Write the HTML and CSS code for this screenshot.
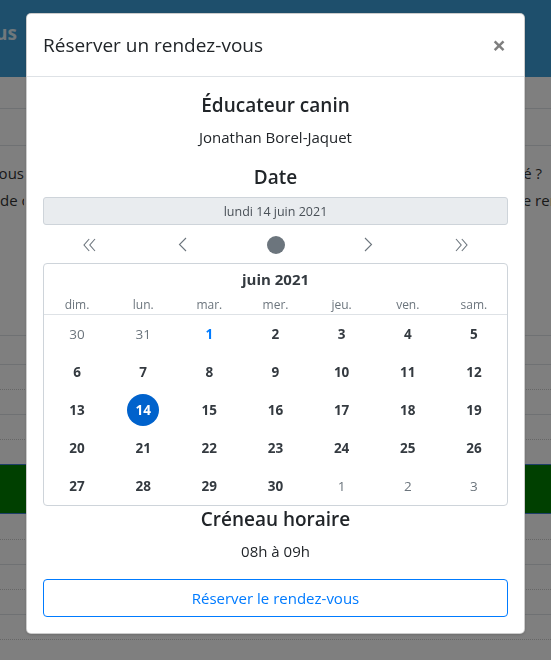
FILE: index.html
```html
<!DOCTYPE html>
<html lang="fr">
<head>
<meta charset="utf-8">
<title>Réserver un rendez-vous</title>
<link rel="stylesheet" href="styles.css">
</head>
<body>
<div class="page">
  <header class="topbar"><span class="brand"><span>Nous</span></span></header>
  <div class="subnav"></div>
  <div class="subnav second"></div>
  <div class="intro">
    <div class="intro-line"><span class="cut-left end"><span>Vous</span></span><span class="mid">souhaitez prendre un rendez-vous avec l'éducateur</span><span class="cut-right end"><span>souhaité ?</span></span></div>
    <div class="intro-line"><span class="cut-left"><span>de c</span></span><span class="mid">hoisissez une date et un créneau horaire pour</span><span class="cut-right start"><span>le rendez-vous</span></span></div>
  </div>
  <div class="rows">
    <div class="row solid tall"></div>
    <div class="row solid r2"></div>
    <div class="row dotted"></div>
    <div class="row solid"></div>
    <div class="row dotted"></div>
    <div class="row none"></div>
    <div class="band"></div>
    <div class="row dotted r8"></div>
    <div class="row solid"></div>
    <div class="row dotted"></div>
    <div class="row solid"></div>
    <div class="row dotted"></div>
  </div>
</div>

<div class="backdrop">
  <div class="modal">
    <div class="modal-header">
      <h5 class="modal-title">Réserver un rendez-vous</h5>
      <button class="close" type="button" aria-label="Close">×</button>
    </div>
    <div class="modal-body">
      <h5 class="heading">Éducateur canin</h5>
      <p class="text">Jonathan Borel-Jaquet</p>
      <h5 class="heading">Date</h5>
      <output class="date-output">lundi 14 juin 2021</output>
      <div class="cal-nav">
        <span class="nav-btn"><svg width="13" height="14" viewBox="0 0 13 14"><path d="M6.2 1 L1 7 L6.2 13 M12 1 L6.8 7 L12 13" fill="none" stroke="#6c757d" stroke-width="1.1"/></svg></span>
        <span class="nav-btn"><svg width="9" height="15" viewBox="0 0 9 15"><path d="M8 1 L1.5 7.5 L8 14" fill="none" stroke="#6c757d" stroke-width="1.1"/></svg></span>
        <span class="nav-btn"><span class="dot"></span></span>
        <span class="nav-btn"><svg width="9" height="15" viewBox="0 0 9 15"><path d="M1 1 L7.5 7.5 L1 14" fill="none" stroke="#6c757d" stroke-width="1.1"/></svg></span>
        <span class="nav-btn"><svg width="13" height="14" viewBox="0 0 13 14"><path d="M1 1 L6.2 7 L1 13 M6.8 1 L12 7 L6.8 13" fill="none" stroke="#6c757d" stroke-width="1.1"/></svg></span>
      </div>
      <div class="cal">
        <div class="cal-caption">juin 2021</div>
        <div class="cal-weekdays">
          <span>dim.</span><span>lun.</span><span>mar.</span><span>mer.</span><span>jeu.</span><span>ven.</span><span>sam.</span>
        </div>
        <div class="cal-days">
          <span class="day"><span class="num muted">30</span></span>
          <span class="day"><span class="num muted">31</span></span>
          <span class="day"><span class="num today">1</span></span>
          <span class="day"><span class="num">2</span></span>
          <span class="day"><span class="num">3</span></span>
          <span class="day"><span class="num">4</span></span>
          <span class="day"><span class="num">5</span></span>
          <span class="day"><span class="num">6</span></span>
          <span class="day"><span class="num">7</span></span>
          <span class="day"><span class="num">8</span></span>
          <span class="day"><span class="num">9</span></span>
          <span class="day"><span class="num">10</span></span>
          <span class="day"><span class="num">11</span></span>
          <span class="day"><span class="num">12</span></span>
          <span class="day"><span class="num">13</span></span>
          <span class="day"><span class="num selected">14</span></span>
          <span class="day"><span class="num">15</span></span>
          <span class="day"><span class="num">16</span></span>
          <span class="day"><span class="num">17</span></span>
          <span class="day"><span class="num">18</span></span>
          <span class="day"><span class="num">19</span></span>
          <span class="day"><span class="num">20</span></span>
          <span class="day"><span class="num">21</span></span>
          <span class="day"><span class="num">22</span></span>
          <span class="day"><span class="num">23</span></span>
          <span class="day"><span class="num">24</span></span>
          <span class="day"><span class="num">25</span></span>
          <span class="day"><span class="num">26</span></span>
          <span class="day"><span class="num">27</span></span>
          <span class="day"><span class="num">28</span></span>
          <span class="day"><span class="num">29</span></span>
          <span class="day"><span class="num">30</span></span>
          <span class="day"><span class="num muted">1</span></span>
          <span class="day"><span class="num muted">2</span></span>
          <span class="day"><span class="num muted">3</span></span>
        </div>
      </div>
      <h5 class="heading slot">Créneau horaire</h5>
      <p class="text">08h à 09h</p>
      <button class="btn-book" type="button">Réserver le rendez-vous</button>
    </div>
  </div>
</div>
</body>
</html>
```
FILE: styles.css
```css
* { box-sizing: border-box; }
html, body { margin: 0; padding: 0; }
body {
  width: 551px;
  height: 660px;
  overflow: hidden;
  position: relative;
  background: #fff;
  color: #212529;
  font-family: "Open Sans", "Noto Sans", sans-serif;
}

/* background page */
.topbar {
  height: 77px;
  background: #3d9fd8;
  display: flex;
  align-items: flex-start;
}
.brand {
  width: 17px;
  display: flex;
  justify-content: flex-end;
  overflow: hidden;
  white-space: nowrap;
  color: rgba(255,255,255,0.85);
  font-weight: 700;
  font-size: 19px;
  line-height: 66px;
}
.brand span { flex: none; }
.subnav { height: 32px; border-bottom: 1px solid #dee2e6; }
.subnav.second { height: 37px; }
.intro { padding-top: 14px; font-size: 15px; line-height: 27px; color: #333; }
.intro-line {
  display: grid;
  grid-template-columns: 24px 1fr 50px;
  white-space: nowrap;
}
.intro-line > span { overflow: hidden; display: flex; }
.intro-line > span > span { flex: none; }
.cut-left.end { justify-content: flex-end; }
.cut-right.end { justify-content: flex-end; padding-right: 9px; }
.cut-right.start { padding-left: 18px; }
.mid { padding-left: 8px; }
.row { height: 25px; border-bottom: 1px solid #dee2e6; }
.row.tall { height: 122px; }
.row.r2 { height: 29px; }
.row.r8 { height: 26px; }
.row.dotted { border-bottom-style: dotted; border-bottom-color: #ccc; }
.row.none { border-bottom: 0; height: 24px; }
.band {
  height: 50px;
  background: #008000;
  border-top: 1px solid #3f7fd0;
  border-bottom: 1px solid #3f7fd0;
}

/* overlay */
.backdrop {
  position: fixed;
  inset: 0;
  background: rgba(0,0,0,0.5);
}
.modal {
  width: 499px;
  margin: 13px auto 0;
  background: #fff;
  border: 1px solid rgba(0,0,0,0.2);
  border-radius: 5px;
  box-shadow: 0 1px 3px rgba(0,0,0,0.15);
}
.modal-header {
  display: flex;
  align-items: center;
  justify-content: space-between;
  padding: 16px;
  border-bottom: 1px solid #dee2e6;
}
.modal-title {
  margin: 0;
  font-size: 19px;
  font-weight: 500;
  line-height: 30px;
}
.close {
  border: 0;
  background: none;
  padding: 0;
  margin-right: 2px;
  font-family: "Open Sans", sans-serif;
  font-size: 24px;
  font-weight: 700;
  line-height: 1;
  color: #000;
  opacity: 0.5;
}
.modal-body {
  padding: 16px;
  text-align: center;
}
.heading {
  margin: 0 0 8px;
  font-size: 19px;
  font-weight: 600;
  line-height: 24px;
}
.text {
  margin: 0 0 16px;
  font-size: 15px;
  line-height: 24px;
}
.date-output {
  display: flex;
  align-items: center;
  justify-content: center;
  height: 28px;
  background: #e9ecef;
  border: 1px solid #ced4da;
  border-radius: 3px;
  font-size: 12.5px;
  color: #495057;
}
.cal-nav {
  display: grid;
  grid-template-columns: repeat(5, 1fr);
  height: 31px;
  margin: 4px 0 3px;
}
.nav-btn { display: flex; align-items: center; justify-content: center; }
.dot { width: 18px; height: 18px; border-radius: 50%; background: #6c757d; }
.cal {
  border: 1px solid #ced4da;
  border-radius: 4px;
}
.cal-caption {
  padding: 4px;
  line-height: 23px;
  font-size: 15px;
  font-weight: 700;
  color: #343a40;
}
.cal-weekdays {
  display: grid;
  grid-template-columns: repeat(7, 1fr);
  font-size: 12px;
  line-height: 19px;
  color: #6c757d;
  border-bottom: 1px solid #dee2e6;
}
.cal-days {
  display: grid;
  grid-template-columns: repeat(7, 1fr);
  grid-auto-rows: 38px;
}
.day { display: flex; align-items: center; justify-content: center; }
.num {
  width: 32px;
  height: 32px;
  border-radius: 50%;
  display: flex;
  align-items: center;
  justify-content: center;
  font-size: 13.5px;
  font-weight: 700;
  color: #343a40;
}
.num.muted { font-weight: 400; color: #6c757d; }
.num.today { color: #007bff; }
.num.selected { background: #0062cc; color: #fff; }
.heading.slot { margin-top: 1px; }
.btn-book {
  display: block;
  width: 100%;
  height: 38px;
  background: #fff;
  border: 1px solid #007bff;
  border-radius: 4px;
  color: #007bff;
  font-family: "Open Sans", "Noto Sans", sans-serif;
  font-size: 15px;
}
```
